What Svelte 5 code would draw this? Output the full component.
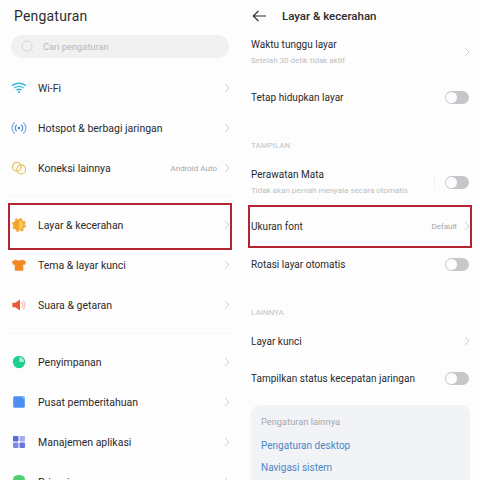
<script lang="ts">
  const groups = [
    [
      { icon: "wifi", label: "Wi-Fi" },
      { icon: "hotspot", label: "Hotspot & berbagi jaringan" },
      { icon: "link", label: "Koneksi lainnya", value: "Android Auto" }
    ],
    [
      { icon: "sun", label: "Layar & kecerahan", marked: true },
      { icon: "shirt", label: "Tema & layar kunci" },
      { icon: "sound", label: "Suara & getaran" }
    ],
    [
      { icon: "pie", label: "Penyimpanan" },
      { icon: "notif", label: "Pusat pemberitahuan" },
      { icon: "apps", label: "Manajemen aplikasi" },
      { icon: "privacy", label: "Privasi" }
    ]
  ];
</script>

{#snippet chevron()}
  <svg class="chev" width="6" height="10" viewBox="0 0 6 10"><path d="M1 1l4 4-4 4" fill="none" stroke="#cfd1d4" stroke-width="1"/></svg>
{/snippet}

{#snippet toggle()}
  <span class="toggle"><span class="knob"></span></span>
{/snippet}

{#snippet icon(name: string)}
  <svg class="ico" width="16" height="16" viewBox="0 0 16 16">
    {#if name === "wifi"}
      <g fill="none" stroke="#35b6da" stroke-width="1.300" stroke-linecap="round">
        <path d="M1.400 5.400c4-2.600 9.200-2.600 13.200 0"/>
        <path d="M3.700 7.700c2.600-1.700 6-1.700 8.600 0"/>
        <path d="M5.900 9.900c1.300-.8 2.900-.8 4.200 0"/>
      </g>
      <circle cx="8" cy="12.200" r="1.100" fill="#35b6da"/>
    {:else if name === "hotspot"}
      <g fill="none" stroke-width="1.300" stroke-linecap="round">
        <path d="M3.400 2.800a7 7 0 0 0 0 10.400" stroke="#8fb2e6"/>
        <path d="M12.600 2.800a7 7 0 0 1 0 10.400" stroke="#8fb2e6"/>
        <path d="M5.400 5.200a4 4 0 0 0 0 5.600" stroke="#5a8edb"/>
        <path d="M10.600 5.200a4 4 0 0 1 0 5.600" stroke="#5a8edb"/>
      </g>
      <circle cx="8" cy="8" r="1.300" fill="#4a80d4"/>
    {:else if name === "link"}
      <g fill="none" stroke="#e8c766" stroke-width="1.300">
        <circle cx="5.800" cy="6.800" r="4.400"/>
        <circle cx="10.200" cy="9.400" r="4.400"/>
      </g>
    {:else if name === "sun"}
      <circle cx="8" cy="8" r="5.800" fill="#f3a32a"/>
      <circle cx="8" cy="8" r="6.300" fill="none" stroke="#f3a32a" stroke-width="1.400" stroke-dasharray="2.500 2.450"/>
      <path d="M8 3.600a4.400 4.400 0 0 1 0 8.800z" fill="#f8c95a"/>
    {:else if name === "shirt"}
      <path d="M4.800 2.400L1 4.400l.8 3.400 1.900-.4v5.400c0 .6.300.9.900.9h6.800c.6 0 .9-.3.900-.9V7.400l1.900.4.800-3.400-3.800-2c-.8 1.500-5.600 1.500-6.400 0z" fill="#f08a24"/>
    {:else if name === "sound"}
      <path d="M1.400 5.800h2.800L9 2.400v11.200l-4.800-3.400H1.400z" fill="#ea5a3a"/>
      <path d="M10.800 5.400a3.800 3.800 0 0 1 0 5.200M12.300 3.800a6 6 0 0 1 0 8.400" fill="none" stroke="#f5c0b0" stroke-width="1.200"/>
    {:else if name === "pie"}
      <circle cx="8" cy="8" r="6.200" fill="#1fcf8f"/>
      <path d="M8.400 2.800a5.200 5.200 0 0 1 4.800 5.200H8.400z" fill="#a6eed2"/>
    {:else if name === "notif"}
      <rect x="2.200" y="2.200" width="11.600" height="11.600" rx="1.500" fill="#4a90f0"/>
      <path d="M10 2.200h2.300a1.500 1.500 0 0 1 1.500 1.500V6z" fill="#8cbaf6"/>
    {:else if name === "apps"}
      <rect x="2" y="2" width="5.500" height="5.500" rx="1" fill="#5b6bd8"/>
      <rect x="8.500" y="2" width="5.500" height="5.500" rx="1" fill="#a5aeea"/>
      <rect x="2" y="8.500" width="5.500" height="5.500" rx="1" fill="#7c89e0"/>
      <rect x="8.500" y="8.500" width="5.500" height="5.500" rx="1" fill="#6676dc"/>
    {:else}
      <path d="M2 5a6 4 0 0 1 12 0v8H2z" fill="#4fcf6e"/>
    {/if}
  </svg>
{/snippet}

<div class="screen">
  <section class="panel main">
    <h1>Pengaturan</h1>
    <div class="search">
      <svg width="13" height="13" viewBox="0 0 13 13"><circle cx="6" cy="6" r="5" fill="none" stroke="#d3d5d8" stroke-width="1"/><path d="M9.700 9.700l2.300 2.300" stroke="#d3d5d8"/></svg>
      <span>Cari pengaturan</span>
    </div>

    {#each groups as group, i}
      {#if i > 0}<hr />{/if}
      <ul>
        {#each group as item}
          <li class="item">
            {@render icon(item.icon)}
            <span class="label">{item.label}</span>
            {#if item.value}<span class="value">{item.value}</span>{/if}
            {@render chevron()}
            {#if item.marked}<span class="mark left"></span>{/if}
          </li>
        {/each}
      </ul>
    {/each}
  </section>

  <section class="panel detail">
    <header>
      <svg width="15" height="12" viewBox="0 0 15 12"><path d="M14 6H1.200M6.400 1L1.200 6l5.200 5" fill="none" stroke="#2b2b2b" stroke-width="1.100"/></svg>
      <h2>Layar &amp; kecerahan</h2>
    </header>

    <div class="row sub first">
      <div class="text">
        <span class="label">Waktu tunggu layar</span>
        <small>Setelah 30 detik tidak aktif</small>
      </div>
      {@render chevron()}
    </div>
    <div class="row gap">
      <span class="label">Tetap hidupkan layar</span>
      {@render toggle()}
    </div>

    <div class="caption tampilan">TAMPILAN</div>
    <div class="row sub">
      <div class="text">
        <span class="label">Perawatan Mata</span>
        <small>Tidak akan pernah menyala secara otomatis</small>
      </div>
      <span class="sep"></span>
      {@render toggle()}
    </div>
    <div class="row font">
      <span class="label">Ukuran font</span>
      <span class="value">Default</span>
      {@render chevron()}
      <span class="mark right"></span>
    </div>
    <div class="row">
      <span class="label">Rotasi layar otomatis</span>
      {@render toggle()}
    </div>

    <div class="caption lainnya">LAINNYA</div>
    <div class="row">
      <span class="label">Layar kunci</span>
      {@render chevron()}
    </div>
    <div class="row status">
      <span class="label">Tampilkan status kecepatan jaringan</span>
      {@render toggle()}
    </div>

    <div class="card">
      <p>Pengaturan lainnya</p>
      <a href="#desktop">Pengaturan desktop</a>
      <a href="#navigasi">Navigasi sistem</a>
    </div>
  </section>
</div>

<style>
  :global(body) {
    margin: 0;
    background: #fff;
  }

  .screen {
    display: grid;
    grid-template-columns: 240px 240px;
    width: 480px;
    height: 487px;
    overflow: hidden;
    font-family: Roboto, "Noto Sans", sans-serif;
    color: #2a2a2c;
    background: #fff;
  }

  .panel {
    height: 480px;
    overflow: hidden;
    background: #fdfdfe;
  }

  h1 {
    margin: 0;
    padding-left: 14px;
    height: 32px;
    font-size: 14px;
    line-height: 33px;
    font-weight: 400;
    letter-spacing: 0.2px;
    color: #2d2d2f;
  }

  .search {
    display: flex;
    align-items: center;
    gap: 9px;
    height: 23px;
    margin: 3px 11px 10px;
    padding-left: 10px;
    border-radius: 12px;
    background: #f1f1f2;
    font-size: 9.300px;
    color: #b5b7ba;
  }

  ul {
    margin: 0;
    padding: 0;
    list-style: none;
  }

  hr {
    height: 1px;
    margin: 8px 8px;
    border: 0;
    background: #f7f7f8;
  }

  .item {
    position: relative;
    display: flex;
    align-items: center;
    height: 40px;
    padding: 0 11px;
  }

  .ico {
    flex: none;
    margin-right: 11px;
  }

  .label {
    flex: 1;
    padding-top: 2px;
    font-size: 10.500px;
    line-height: 16px;
    white-space: nowrap;
  }

  .row .label {
    font-size: 10px;
    letter-spacing: 0.02px;
  }

  .text .label {
    padding-top: 0;
  }

  .value {
    margin-right: 7px;
    font-size: 8px;
    color: #a3a5a8;
  }

  .chev {
    flex: none;
    margin-right: -1px;
  }

  .mark {
    position: absolute;
    border: 2px solid #b3242f;
    box-sizing: border-box;
    pointer-events: none;
  }

  .mark.left {
    left: 8px;
    width: 224px;
    top: -2px;
    height: 47px;
  }

  .mark.right {
    left: -3px;
    width: 224px;
    top: -2px;
    height: 43px;
  }

  header {
    display: flex;
    align-items: center;
    gap: 15px;
    height: 32px;
    padding-left: 12px;
  }

  h2 {
    margin: 0;
    font-size: 11.500px;
    font-weight: 500;
    color: #2b2b2d;
  }

  .row {
    position: relative;
    display: flex;
    align-items: center;
    height: 38px;
    margin: 0 11px 0 11px;
  }

  .row.first {
    margin-top: 1px;
  }

  .row.gap {
    margin-top: 7px;
  }

  .row.font {
    margin-top: 6px;
  }

  .row.status {
    margin-top: -1px;
  }

  .text {
    flex: 1;
    display: flex;
    flex-direction: column;
    gap: 2px;
    min-width: 0;
  }

  small {
    font-size: 8px;
    line-height: 12px;
    color: #bcbec1;
    white-space: nowrap;
  }

  .sep {
    width: 1px;
    height: 12px;
    margin-right: 10px;
    background: #f1f1f2;
  }

  .caption {
    height: 16px;
    padding-left: 11px;
    font-size: 8px;
    line-height: 16px;
    color: #c2c4c6;
  }

  .caption.tampilan {
    margin: 22px 0 9px;
  }

  .caption.lainnya {
    margin: 22px 0 1px;
  }

  .toggle {
    flex: none;
    position: relative;
    width: 24px;
    height: 13px;
    border-radius: 7px;
    background: #c6c7ca;
  }

  .knob {
    position: absolute;
    left: 1px;
    top: 1px;
    width: 11px;
    height: 11px;
    border-radius: 50%;
    background: #fdfdfe;
  }

  .card {
    display: flex;
    flex-direction: column;
    margin: 8px 10px 0 11px;
    padding: 10px 10px 0 10px;
    height: 90px;
    border-radius: 9px;
    background: #f2f3f7;
  }

  .card p {
    margin: 0 0 9px;
    font-size: 9.300px;
    line-height: 14px;
    color: #a6a8ab;
  }

  .card a {
    height: 22px;
    font-size: 10px;
    line-height: 16px;
    color: #4a86c4;
    text-decoration: none;
  }
</style>
